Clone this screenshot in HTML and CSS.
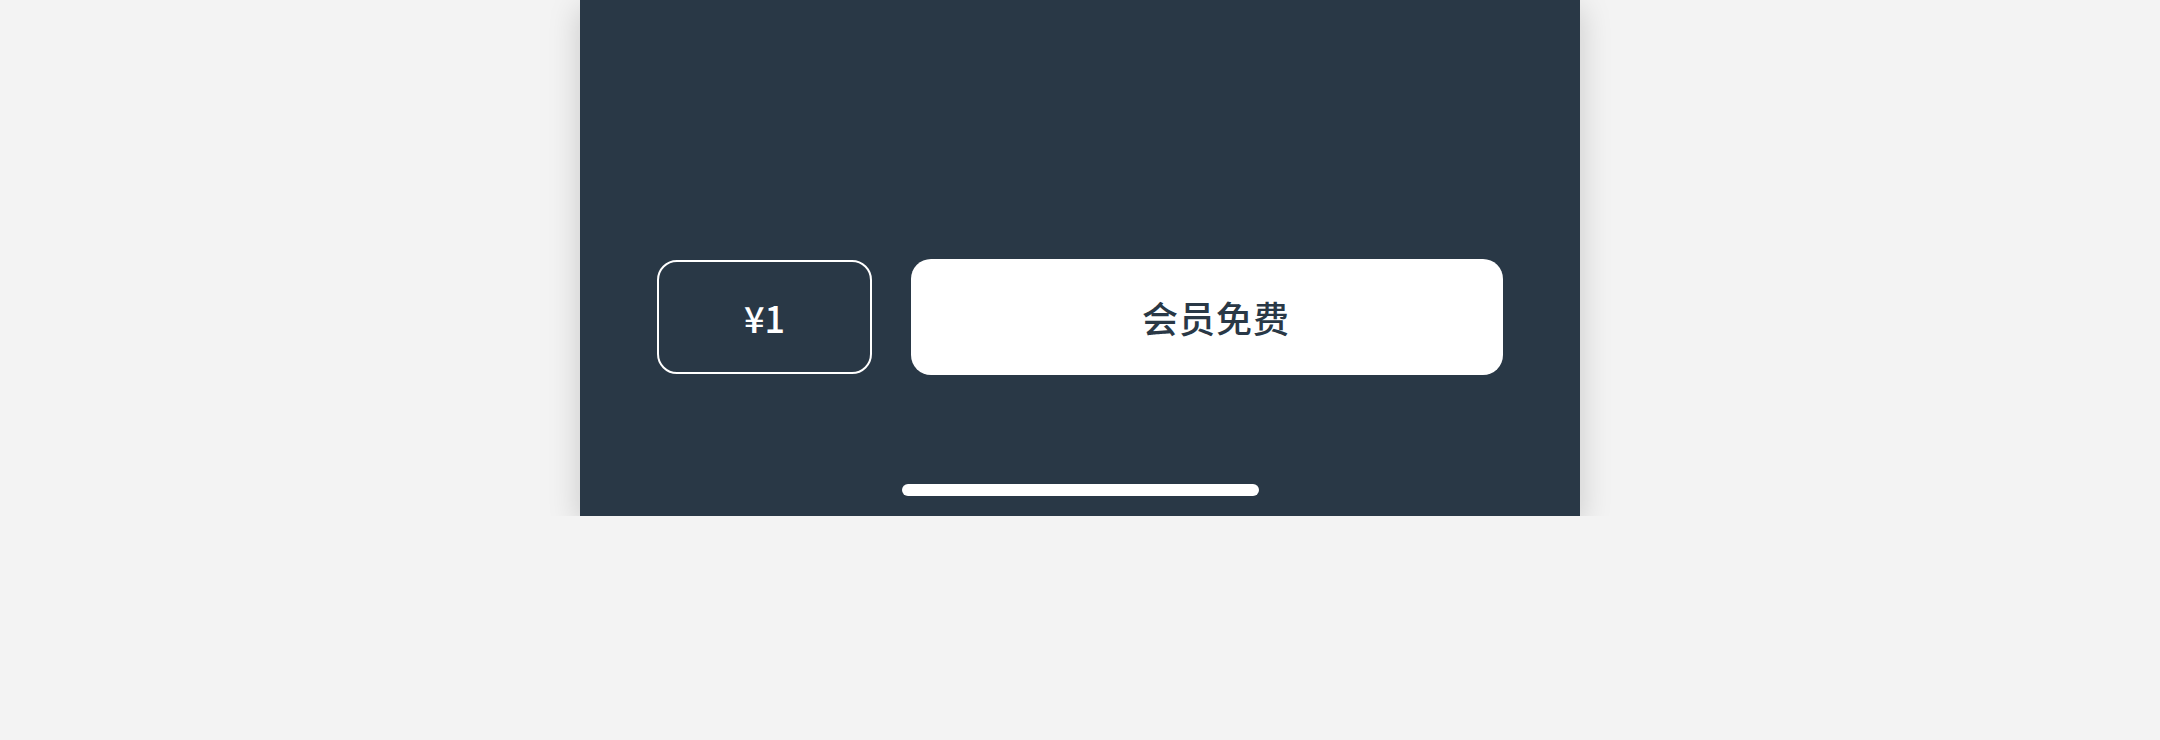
FILE: index.html
```html
<!DOCTYPE html>
<html lang="zh">
<head>
  <meta charset="UTF-8">
  <title>会员免费</title>
  <link rel="stylesheet" href="styles.css">
</head>
<body>
  <div class="phone">
    <div class="actions">
      <button class="btn-price">¥1</button>
      <button class="btn-member">会员免费</button>
    </div>
    <div class="home-bar"></div>
  </div>
</body>
</html>
```

FILE: styles.css
```css
body {
  margin: 0;
  background: #f3f3f3;
  font-family: "Noto Sans CJK SC", "Noto Sans", sans-serif;
}

.phone {
  width: 1000px;
  height: 516px;
  margin: 0 auto;
  background: #293846;
  box-shadow: 0 8px 30px rgba(0, 0, 0, 0.18);
  display: flex;
  flex-direction: column;
  align-items: center;
  padding-top: 259px;
  box-sizing: border-box;
}

.actions {
  display: flex;
  align-items: center;
  gap: 39px;
  width: 846px;
  height: 116px;
}

.actions button {
  font-family: inherit;
  cursor: pointer;
}

.btn-price {
  width: 215px;
  height: 114px;
  background: transparent;
  border: 2px solid #ffffff;
  border-radius: 20px;
  color: #ffffff;
  font-size: 36px;
  font-weight: 500;
}

.btn-member {
  flex: 1;
  height: 116px;
  padding-left: 24px;
  background: #ffffff;
  border: none;
  border-radius: 20px;
  color: #293846;
  font-size: 36px;
  font-weight: 500;
  letter-spacing: 1px;
}

.home-bar {
  width: 357px;
  height: 12px;
  margin-top: 109px;
  background: #ffffff;
  border-radius: 6px;
}
```
